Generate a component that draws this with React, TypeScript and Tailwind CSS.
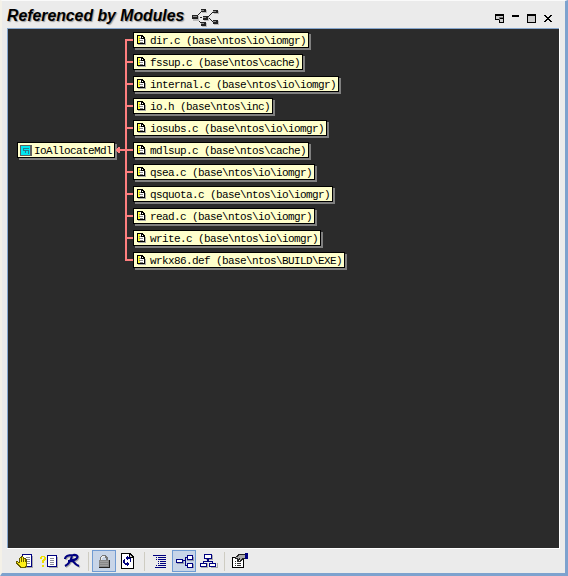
import type { ReactNode } from "react";

const modules = [
  "dir.c (base\\ntos\\io\\iomgr)",
  "fssup.c (base\\ntos\\cache)",
  "internal.c (base\\ntos\\io\\iomgr)",
  "io.h (base\\ntos\\inc)",
  "iosubs.c (base\\ntos\\io\\iomgr)",
  "mdlsup.c (base\\ntos\\cache)",
  "qsea.c (base\\ntos\\io\\iomgr)",
  "qsquota.c (base\\ntos\\io\\iomgr)",
  "read.c (base\\ntos\\io\\iomgr)",
  "write.c (base\\ntos\\io\\iomgr)",
  "wrkx86.def (base\\ntos\\BUILD\\EXE)",
];

function Icon({ children, w = 16, h = 16, className = "" }: { children: ReactNode; w?: number; h?: number; className?: string }) {
  return (
    <svg width={w} height={h} viewBox={`0 0 ${w} ${h}`} shapeRendering="crispEdges" fill="none" className={`block shrink-0 ${className}`}>
      {children}
    </svg>
  );
}

function FileIcon() {
  return (
    <Icon w={10} h={10}>
      <path d="M2 9h7V4h1v6H2z" fill="#a8a8a8" />
      <path d="M1 0h5l3 3v6H1z" fill="#000" />
      <path d="M2 1h3v3h3v4H2z" fill="#fff" />
      <path d="M2 1h2v7H2z" fill="#ffff30" />
      <path d="M6 2h1v1H6z" fill="#fff" />
      <path d="M3 3h2v1H3zM3 5h4v1H3zM4 7h3v1H4z" fill="#888" />
    </Icon>
  );
}

function FunctionIcon() {
  return (
    <Icon w={12} h={11}>
      <path d="M0 0h12v11H0z" fill="#606060" />
      <path d="M1 1h9v9H1z" fill="#00e8f0" />
      <path d="M3 3h6v1H4v1h5v4H8V6H6v2H5V6H3z" fill="#287f91" />
    </Icon>
  );
}

function Node({ icon, label }: { icon: ReactNode; label: string }) {
  return (
    <div className="flex h-4 w-fit items-center border border-black bg-[#ffffcc] pr-0.5 pl-0.5 shadow-[2px_2px_0_#808080]">
      <span className="flex w-[14px]">{icon}</span>
      <span className="pt-px font-['Liberation_Mono',monospace] text-[11px] leading-[14px] tracking-[-0.602px] whitespace-pre text-black">{label}</span>
    </div>
  );
}

function TitleBar() {
  return (
    <header className="flex h-[27px] items-start pl-[5px]">
      <h1 className="mt-[5px] w-[178px] font-['Liberation_Sans',Arial,sans-serif] text-[15.8px] leading-[19px] font-bold whitespace-nowrap text-black italic [text-shadow:1px_1px_1px_#999]">
        Referenced by Modules
      </h1>
      <Icon w={28} h={20} className="mt-[7px] ml-[6px]">
        <path d="M6 7h1V6h1V5h1V4h1V3h1v1h-1v1H9v1H8v1H7v1H6zM6 11h1v1h1v1h1v1h1v1H9v-1H8v-1H7v-1H6zM7 9h1v1H7zM9 9h2v1H9zM17 8h1V7h1V6h1V5h1V4h1v1h-1v1h-1v1h-1v1h-1v1h-1zM18 10h1v1h1v1h1v1h1v1h-1v-1h-1v-1h-1v-1h-1z" fill="#222" />
        <path d="M2 8h6v5H2zM11 2h5v3h-5zM13 9h5v4h-5zM11 15h5v4h-5zM23 3h5v3h-5zM23 13h5v4h-5z" fill="#bbb" />
        <path d="M1 7h6v4H1zM10 1h5v3h-5zM12 8h5v4h-5zM10 14h5v4h-5zM22 2h5v3h-5zM22 12h5v4h-5z" fill="#222" />
        <path d="M2 8h4v1H2zM10 2h3v1h-3zM12 9h3v1h-3zM10 15h3v1h-3zM22 3h3v1h-3zM22 13h3v1h-3z" fill="#8a8a8a" />
      </Icon>
      <div className="mt-[13px] mr-[13px] ml-auto flex gap-[7px]">
        <Icon w={9} h={9}>
          <path d="M0 0h9v9H4V6H0z" fill="#000" />
          <path d="M1 2h7v2H5v1H1zM5 5h3v3H5z" fill="#ccc" />
          <path d="M4 3h4v1H5v2H4z" fill="#777" />
        </Icon>
        <Icon w={9} h={9}><path d="M1 1h7v2H1z" fill="#000" /></Icon>
        <Icon w={9} h={9}>
          <path d="M0 0h9v9H0z" fill="#000" />
          <path d="M1 2h7v6H1z" fill="#ccc" />
        </Icon>
        <Icon w={9} h={9}><path d="M1 1h2v1h1v1h2V2h1V1h2v1H8v1H7v1H6v1h1v1h1v1h1v1H7V7H6V6H4v1H3v1H1V7h1V6h1V5h1V4H3V3H2V2H1z" fill="#000" /></Icon>
      </div>
    </header>
  );
}

function Graph() {
  return (
    <main className="flex h-[520px] w-[552px] items-start border-t border-l border-[#86a6cc] bg-[#2b2b2b] pt-[3px] pl-[9px]">
      <div className="mt-[110px]"><Node icon={<FunctionIcon />} label="IoAllocateMdl" /></div>
      <Icon w={18} h={230}>
        <path d="M10 7h2v222h-2zM2 117h8v2H2z" fill="#ff7f7f" />
        {modules.map((label, i) => <rect key={label} x="12" y={7 + i * 22} width="6" height="2" fill="#ff7f7f" />)}
        <path d="M1 117h1v-1h1v-1h2v2h1v2H5v2H3v-1H2v-1H1z" fill="#ff7f7f" />
      </Icon>
      <div className="flex flex-col gap-1.5">
        {modules.map((label) => <Node key={label} icon={<FileIcon />} label={label} />)}
      </div>
    </main>
  );
}

function Tool({ children, active = false }: { children: ReactNode; active?: boolean }) {
  return (
    <button className={`flex h-[22px] w-6 items-center justify-center border ${active ? "border-[#719bd2] bg-[#c8d5e8]" : "border-transparent"}`}>
      <Icon w={18} className="-mr-0.5">{children}</Icon>
    </button>
  );
}

function Separator() {
  return <div className="flex w-2 justify-center"><span className="h-[19px] w-px bg-[#ceccc2]" /></div>;
}

function Toolbar() {
  return (
    <footer className="flex items-center pt-px pl-[10px]">
      <Tool>
        <path d="M8 14h8V3h1v12H8z" fill="#aaa" />
        <path d="M6 1h10v13H6z" fill="#000080" />
        <path d="M7 2h8v11H7z" fill="#fff" />
        <path d="M10 4h4v1h-4zM10 6h4v1h-4zM11 8h3v1h-3zM11 10h3v1h-3z" fill="#889" />
        <path d="M4 4h1V3h2v1h1v1h2v1h1v8h-1v1H4v-1H3v-1H2v-1H1v-1H0V8h2v1h1V5h1z" fill="#665b00" />
        <path d="M4 5h1v4h1V4h1v5h1V6h1v3h1v4H9v1H5v-1H4v-1H3v-1H2v-1H1V9h1v1h2z" fill="#ffef18" />
      </Tool>
      <Tool>
        <path d="M9 14h8V4h1v11H9z" fill="#aaa" />
        <path d="M7 2h10v12H7z" fill="#000080" />
        <path d="M8 3h8v10H8z" fill="#fff" />
        <path d="M10 5h4v1h-4zM10 7h4v1h-4zM10 9h4v1h-4zM10 11h4v1h-4z" fill="#889" />
        <path d="M0 4h1V3h4v1h1v3H5v1H4v2H2V7h1V6h1V4H2v2H0zM2 12h2v2H2z" fill="#eee000" />
      </Tool>
      <Tool>
        <g shapeRendering="geometricPrecision">
          <path d="M1 6C1 3 4 2 9 2c7-1 5 5-1 5 2 2 3 5 7 6M8 3C7 7 5 11 1 13M4 8h4" stroke="#aaa" strokeWidth="2" transform="translate(1 1)" />
          <path d="M1 6C1 3 4 2 9 2c7-1 5 5-1 5 2 2 3 5 7 6M8 3C7 7 5 11 1 13M4 8h4" stroke="#000080" strokeWidth="2.1" />
        </g>
      </Tool>
      <Separator />
      <Tool active>
        <path d="M4 7V4h1V3h1V2h4v1h1v1h1v3h-2V5H9V4H7v1H6v2z" fill="#777" />
        <path d="M5 4h1V3h3v1H7v1H6v2H5z" fill="#eee" />
        <path d="M3 7h11v8H3z" fill="#222" />
        <path d="M3 7h10v7H3z" fill="#888" />
        <path d="M4 8h8v1H4zM4 10h8v1H4zM4 12h8v1H4z" fill="#a0a0a0" />
      </Tool>
      <Tool>
        <path d="M1 0h9l4 4v12H1z" fill="#000" />
        <path d="M2 1h7v4h4v10H2z" fill="#fff" />
        <path d="M10 2h1v1h1v1h-2z" fill="#ccc" />
        <path d="M7 3h1v1h2v1h1v4h-1V6H8v1H7V6H6V4h1zM4 6h1v4h2V9h1v1h1v2H8v1H7v-1H5v-1H4v-1H3V7h1z" fill="#000080" />
      </Tool>
      <Separator />
      <Tool>
        <path d="M1 2h13v1H1zM4 4h1v1H4zM6 4h8v1H6zM4 6h1v1H4zM6 6h8v1H6zM6 8h1v1H6zM8 8h6v1H8zM6 10h1v1H6zM8 10h6v1H8zM4 12h1v1H4zM6 12h8v1H6zM3 14h11v1H3z" fill="#000080" />
      </Tool>
      <Tool active>
        <path d="M1 10h6V7h1v4H1zM11 7h6V4h1v4h-7zM11 14h6v-3h1v4h-7z" fill="#929caa" />
        <path d="M0 6h7v1h2V4h2V2h6v5h-6V5h-1v7h1v-2h6v5h-6v-2H9V8H7v2H0z" fill="#000080" />
        <path d="M1 7h5v2H1zM12 3h4v3h-4zM12 11h4v3h-4z" fill="#fff" />
      </Tool>
      <Tool>
        <path d="M6 6h6V2h1v5H6zM1 14h6v-4h1v5H1zM11 14h6v-4h1v5h-7z" fill="#aaa" />
        <path d="M4 1h8v5H9v2h4v2h3v4H9v-4h3V9H4v1h3v4H0v-4h3V8h4V6H4z" fill="#000080" />
        <path d="M5 2h6v3H5zM1 11h5v2H1zM10 11h5v2h-5z" fill="#fff" />
      </Tool>
      <Separator />
      <Tool>
        <path d="M0 4h12v11H0z" fill="#000" />
        <path d="M1 5h10v9H1z" fill="#fff" />
        <path d="M3 8h1v1H3zM5 8h4v1H5zM3 10h1v1H3zM5 10h4v1H5zM3 12h1v1H3zM5 12h4v1H5z" fill="#333" />
        <path d="M3 4h1V3h1V2h1V1h8v5h-3v1h-1v1H8V7H7v1H5V6H3z" fill="#222" />
        <path d="M4 4h2V3h1V2h6v3h-3v1H9v1H8V5H7v1H6V5H4z" fill="#aaa" />
        <path d="M13 0h3v6h-3z" fill="#000080" />
      </Tool>
    </footer>
  );
}

export default function App() {
  return (
    <div className="flex h-[576px] w-[568px] flex-col border-t border-r-[3px] border-b-[3px] border-l-2 border-t-[#fafafa] border-r-[#7da2ce] border-b-[#7da2ce] border-l-[#f4f1e8] bg-[#ebebeb]">
      <TitleBar />
      <div className="ml-[5px] w-fit border-r border-b border-white"><Graph /></div>
      <Toolbar />
    </div>
  );
}
